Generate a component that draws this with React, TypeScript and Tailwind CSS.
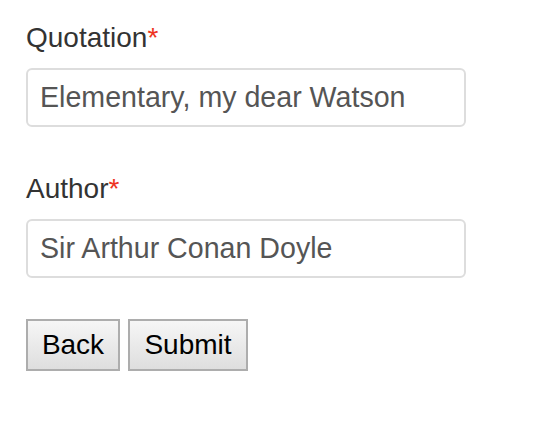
export default function App() {
  return (
    <div className="min-h-screen bg-white pl-[26px] pt-[22px] font-['Liberation_Sans',Arial,sans-serif] text-[#333]">
      <form className="w-[440px]" onSubmit={(e) => e.preventDefault()}>
        <div className="mb-[46px]">
          <label className="block text-[28px] leading-[32px] mb-[14px]">
            Quotation<span className="text-[#e32]">*</span>
          </label>
          <input
            type="text"
            defaultValue="Elementary, my dear Watson"
            className="block h-[59px] w-full rounded-[6px] border-2 border-[#ddd] bg-white px-[12px] text-[28.6px] text-[#555] outline-none"
          />
        </div>
        <div className="mb-[41px]">
          <label className="block text-[28px] leading-[32px] mb-[14px]">
            Author<span className="text-[#e32]">*</span>
          </label>
          <input
            type="text"
            defaultValue="Sir Arthur Conan Doyle"
            className="block h-[59px] w-full rounded-[6px] border-2 border-[#ddd] bg-white px-[12px] text-[28.6px] text-[#555] outline-none"
          />
        </div>
        <div className="flex gap-[8px]">
          <button
            type="button"
            className="h-[52px] w-[94px] border-2 border-[#adadad] bg-gradient-to-b from-[#f6f6f6] to-[#dedede] text-[28px] text-black"
          >
            Back
          </button>
          <button
            type="submit"
            className="h-[52px] w-[120px] border-2 border-[#adadad] bg-gradient-to-b from-[#f6f6f6] to-[#dedede] text-[28px] text-black"
          >
            Submit
          </button>
        </div>
      </form>
    </div>
  );
}
